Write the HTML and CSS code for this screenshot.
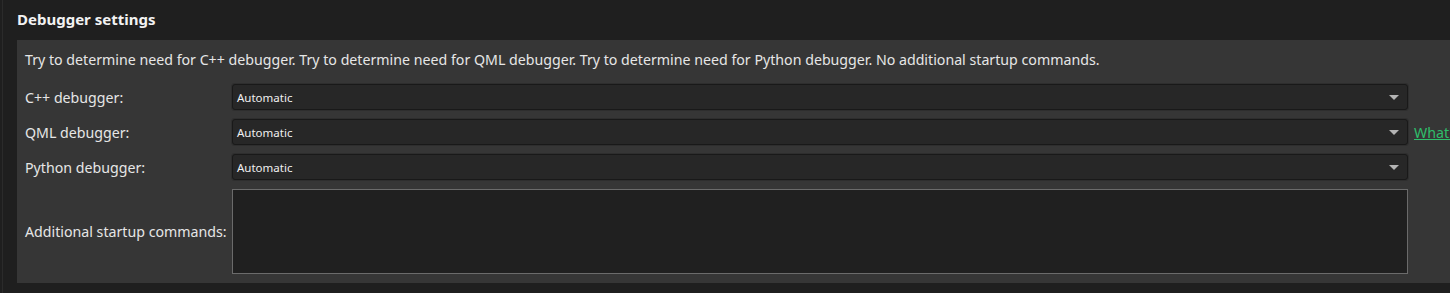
FILE: index.html
```html
<!DOCTYPE html>
<html lang="en">
<head>
  <meta charset="UTF-8" />
  <title>Debugger settings</title>
  <link rel="stylesheet" href="styles.css">
</head>
<body>
  <div class="page">
    <h2 class="section-title">Debugger settings</h2>

    <div class="panel">
      <p class="summary">Try to determine need for C++ debugger. Try to determine need for QML debugger. Try to determine need for Python debugger. No additional startup commands.</p>

      <div class="form">
        <label class="label" for="cppDebugger">C++ debugger:</label>
        <div class="combo" id="cppDebugger">
          <span>Automatic</span>
          <span class="arrow"></span>
        </div>
        <span></span>

        <label class="label" for="qmlDebugger">QML debugger:</label>
        <div class="combo" id="qmlDebugger">
          <span>Automatic</span>
          <span class="arrow"></span>
        </div>
        <a class="link" href="#">What's this?</a>

        <label class="label" for="pyDebugger">Python debugger:</label>
        <div class="combo" id="pyDebugger">
          <span>Automatic</span>
          <span class="arrow"></span>
        </div>
        <span></span>

        <label class="label" for="startupCmds">Additional startup commands:</label>
        <textarea class="commands" id="startupCmds"></textarea>
        <span></span>
      </div>
    </div>
  </div>
</body>
</html>
```

FILE: styles.css
```css
html, body {
  margin: 0;
  height: 100%;
  overflow: hidden;
}
body {
  background-color: #1f1f1f;
  font-family: "Noto Sans", "Open Sans", sans-serif;
  color: #e6e6e6;
  padding-left: 2px;
}
.page {
  border-left: 1px solid #2b2b2b;
  height: 100%;
  width: 1600px;
}
.section-title {
  margin: 0;
  height: 40px;
  line-height: 38px;
  padding-left: 14px;
  font-size: 15px;
  font-weight: bold;
  color: #f2f2f2;
}
.panel {
  margin-left: 14px;
  background-color: #363636;
  padding: 10px 8px 9px 8px;
}
.summary {
  margin: 0 0 14px 0;
  font-size: 14.2px;
  line-height: 20px;
}
.form {
  display: grid;
  grid-template-columns: 201px 1176px auto;
  column-gap: 6px;
  row-gap: 9px;
  align-items: center;
}
.label {
  font-size: 14.2px;
  white-space: nowrap;
}
.combo {
  height: 26px;
  box-sizing: border-box;
  background-color: #272727;
  border: 1px solid #191919;
  border-radius: 3px;
  box-shadow: 0 0 0 1px #2e2e2e;
  display: flex;
  align-items: center;
  justify-content: space-between;
  padding: 0 8px 0 4px;
  font-size: 11.5px;
  color: #f0f0f0;
}
.arrow {
  width: 0;
  height: 0;
  border-left: 5px solid transparent;
  border-right: 5px solid transparent;
  border-top: 5px solid #b4b4b4;
}
.link {
  font-size: 14.2px;
  color: #2fbf6b;
  white-space: nowrap;
}
.commands {
  height: 85px;
  box-sizing: border-box;
  background-color: #202020;
  border: 1px solid #6b6b6b;
  resize: none;
  margin: 0;
}
```
